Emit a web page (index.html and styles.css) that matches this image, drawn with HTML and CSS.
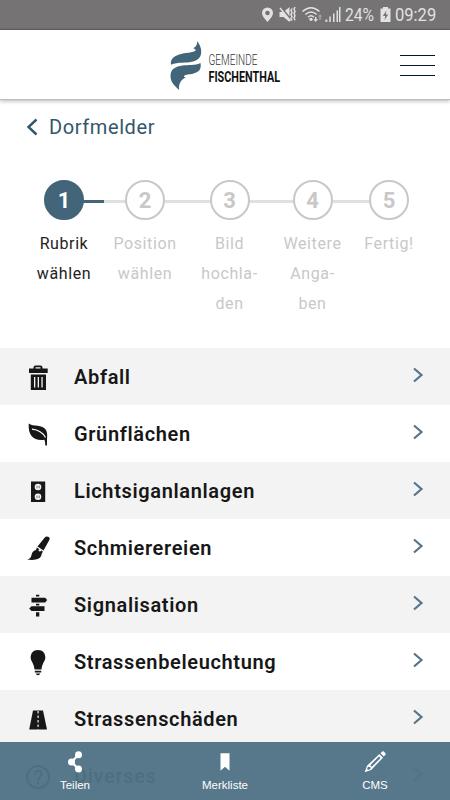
FILE: index.html
```html
<!DOCTYPE html>
<html lang="de">
<head>
<meta charset="utf-8">
<meta name="viewport" content="width=device-width, initial-scale=1">
<title>Dorfmelder</title>
<link rel="stylesheet" href="styles.css">
</head>
<body>
<div class="app">
  <div class="status">
    <svg class="status-icons" width="80" height="30" viewBox="0 0 80 30">
      <path fill-rule="evenodd" d="M7.500 7.500a5.500 5.500 0 0 0-5.500 5.500c0 3.500 5.500 9 5.500 9s5.500-5.500 5.500-9a5.500 5.500 0 0 0-5.500-5.500zm0 3.200a2.300 2.300 0 1 1 0 4.600 2.300 2.300 0 0 1 0-4.600z"/>
      <path d="M19.500 12h4l6-5v15l-6-5h-4z"/>
      <path class="cut" d="M20.500 6.500l10 12.500"/>
      <path class="line" d="M20 8l10.500 13M32 8.500l-1 2 1 2-1 2 1 2-1 2 1 2M35 7l-1 2.200 1 2.200-1 2.200 1 2.200-1 2.200 1 2.200"/>
      <path class="line" d="M42.500 11.500q8.500-7.500 17 0M45.300 14.500q5.700-5 11.400 0M48 17.200q3-3 6 0"/>
      <circle cx="51" cy="19.300" r="1.600"/>
      <path d="M55 17h1.400v2.300H58L55.700 22l-2.300-2.700H55z"/>
      <path class="dim" d="M59.300 20v-3.400h-1.500l2.200-2.300 2.200 2.300h-1.500V20z"/>
      <path d="M65.500 19.500h1.800V22h-1.800zM69.300 16.500h1.500V22h-1.500zM73 13.500h1.500V22H73zM76.500 10.500H78V22h-1.500z"/>
    </svg>
    <svg class="status-icons sig" width="5" height="30" viewBox="0 0 5 30"><path d="M0 7h1.500v15H0z"/></svg>
    <span class="status-text pct">24%</span>
    <svg class="status-icons" width="11" height="30" viewBox="0 0 11 30">
      <path fill-rule="evenodd" d="M3 7h5v1.500h2.500V22H.5V8.500H3zM6.500 10.500L2.800 16h2.500l-.8 4L8.300 14.500H5.800z"/>
    </svg>
    <span class="status-text time">09:29</span>
  </div>

  <header class="header">
    <svg class="logo" width="116" height="52" viewBox="0 0 116 52">
      <path class="mark" d="M28 1c3 4 5 8 4 13-1 4-3 6-8 7.500-6 2-15 0-22 3.300-1-6 3-9 11-11 6-1.500 11-1 14-3.500-1-1-2-1.500-2.500-2.200 3-1.800 4-4 3.500-7.100z"/>
      <path class="mark" d="M31.500 23c1 6-1 9-7 10.500-4 1.200-8 .8-9.500 2.500 0 1.500 1 1 1.500 1.700-4.500 1.800-7 6-6.500 12.300C5 45 1.500 42 1.500 36c0-7 5-9.500 12-10.500 6-.8 12 .3 18-2.500z"/>
      <text class="logo-top" x="39.500" y="25" textLength="49" lengthAdjust="spacingAndGlyphs">GEMEINDE</text>
      <text class="logo-bottom" x="39.500" y="42" textLength="71.500" lengthAdjust="spacingAndGlyphs">FISCHENTHAL</text>
    </svg>
    <div class="burger"><span></span><span></span><span></span></div>
  </header>

  <main>
    <div class="back">
      <svg width="12" height="18" viewBox="0 0 12 18"><path d="M10.500 1.500L2.500 9l8 7.500"/></svg>
      <h1>Dorfmelder</h1>
    </div>

    <ol class="steps">
      <li class="step active"><span class="num">1</span><span class="label">Rubrik<br>wählen</span></li>
      <li class="step"><span class="num">2</span><span class="label">Position<br>wählen</span></li>
      <li class="step"><span class="num">3</span><span class="label">Bild<br>hochla-<br>den</span></li>
      <li class="step"><span class="num">4</span><span class="label">Weitere<br>Anga-<br>ben</span></li>
      <li class="step"><span class="num">5</span><span class="label">Fertig!</span></li>
    </ol>

    <ul class="list">
      <li class="row">
        <svg class="icon" viewBox="0 0 28 28"><path fill-rule="evenodd" d="M5 4.500h4.500V3.500Q9.500 1.500 11.500 1.500h5q2 0 2 2v1H23.700V9H5zM11.500 4.500h5V3.300h-5zM6.800 10.500h15.200v15.500H6.800zM10 13v10.500h1.300V13zM13.700 13v10.500H15V13zM17.400 13v10.500h1.300V13z"/></svg>
        <span class="name">Abfall</span><svg class="chev" viewBox="0 0 12 18"><path d="M2 2.500l7.500 6.500L2 15.500"/></svg>
      </li>
      <li class="row">
        <svg class="icon" viewBox="0 0 28 28"><path d="M4.700 2.500C9 6 18.500 3 22 9c1.500 3 1.300 6 1 9v6.500h-1.700c0-2.500-.3-4.500-1-5.700C10 20 4 15.500 4.700 2.500z"/><path class="vein" d="M8 8.200c5 .5 10.500 3 13.500 8.300"/></svg>
        <span class="name">Grünflächen</span><svg class="chev" viewBox="0 0 12 18"><path d="M2 2.500l7.500 6.500L2 15.500"/></svg>
      </li>
      <li class="row">
        <svg class="icon" viewBox="0 0 28 28"><path d="M7 3.500h14.200v20.500H7z"/><g class="socket"><circle cx="14" cy="9" r="3.300"/><circle cx="14" cy="18.700" r="3.300"/></g><path class="slot" d="M12.500 7.800h1v2.400h-1zM14.700 7.800h1v2.400h-1zM12.500 17.500h1v2.400h-1zM14.700 17.500h1v2.400h-1z"/></svg>
        <span class="name">Lichtsiganlanlagen</span><svg class="chev" viewBox="0 0 12 18"><path d="M2 2.500l7.500 6.500L2 15.500"/></svg>
      </li>
      <li class="row">
        <svg class="icon" viewBox="0 0 28 28"><path d="M21 2.300q1-1.500 3-.5 2.500 1 1.300 3.200L19.500 15.500l-6-4zM12.800 12.500l6 4-1.300 3C17 23.500 12 26 3 24.500c3-.5 4-2 4.500-4.500.5-3 2.500-4.500 4.500-5z"/><circle class="dot" cx="15.900" cy="15.300" r="1.200"/></svg>
        <span class="name">Schmierereien</span><svg class="chev" viewBox="0 0 12 18"><path d="M2 2.500l7.500 6.500L2 15.500"/></svg>
      </li>
      <li class="row">
        <svg class="icon" viewBox="0 0 28 28"><path d="M12 2.800h3.300v1.700H12zM7.500 5.700h13.700l2 2.300-2 2.500H7.500zM12 11.700h3.300v1.800H12zM20.500 14.200H7.500l-2.300 2.400 2.300 2.500h13zM12 20.300h3.300v4.100H12z"/></svg>
        <span class="name">Signalisation</span><svg class="chev" viewBox="0 0 12 18"><path d="M2 2.500l7.500 6.500L2 15.500"/></svg>
      </li>
      <li class="row">
        <svg class="icon" viewBox="0 0 28 28"><path d="M14 1c5 0 7.300 3.500 7.300 7.500 0 4-3.300 5.500-3.800 12h-7C10 14 6.700 12.500 6.700 8.500 6.700 4.500 9 1 14 1zM10.800 21.700h6.400v1.700h-6.400zM11.800 24.600h4.400q-.4 1.600-2.200 1.600t-2.200-1.600z"/></svg>
        <span class="name">Strassenbeleuchtung</span><svg class="chev" viewBox="0 0 12 18"><path d="M2 2.500l7.500 6.500L2 15.500"/></svg>
      </li>
      <li class="row">
        <svg class="icon" viewBox="0 0 28 28"><path d="M9 4.500h10L23 23.500H5.200z"/><path class="lane" d="M14.100 5v18.500"/></svg>
        <span class="name">Strassenschäden</span><svg class="chev" viewBox="0 0 12 18"><path d="M2 2.500l7.500 6.500L2 15.500"/></svg>
      </li>
      <li class="row plain">
        <svg class="icon" viewBox="0 0 28 28"><circle class="ring" cx="14" cy="14" r="11"/><path class="ring" d="M10.500 11.500c0-5 7.500-4.500 7 0-.3 2.500-3.500 2.500-3.500 5.500M14 19v2.500"/></svg>
        <span class="name">Diverses</span><svg class="chev" viewBox="0 0 12 18"><path d="M2 2.500l7.500 6.500L2 15.500"/></svg>
      </li>
    </ul>
  </main>

  <nav class="tabs">
    <a class="tab">
      <svg width="24" height="24" viewBox="0 0 24 24"><path class="stroke" d="M15.500 4.700L8.500 12l7 7"/><circle cx="15.500" cy="4.700" r="3.500"/><circle cx="8.500" cy="12" r="3.500"/><circle cx="15.500" cy="19" r="3.500"/></svg>
      <span>Teilen</span>
    </a>
    <a class="tab">
      <svg width="24" height="24" viewBox="0 0 24 24"><path d="M7.500 3.300h9v17.500L12 16.800l-4.500 4z"/></svg>
      <span>Merkliste</span>
    </a>
    <a class="tab">
      <svg width="24" height="24" viewBox="0 0 24 24"><path fill-rule="evenodd" d="M1.700 22.300l2.300-6.500L16.300 4l3.700 3.700L8.200 20zM5 16.800l-.9 2.300.9.900 2.300-.9.300-1.900zM7.300 15.200l1.500 1.500L17.600 8 16 6.400z"/><path d="M17.500 3.200l1.700-1.600q.8-.8 1.600 0l1.600 1.600q.8.800 0 1.600L20.800 6.500z"/></svg>
      <span>CMS</span>
    </a>
  </nav>
</div>
</body>
</html>
```
FILE: styles.css
```css
* { box-sizing: border-box; }
body { margin: 0; background: #fff; font-family: Roboto, "Liberation Sans", sans-serif; }
ul, ol { list-style: none; margin: 0; padding: 0; }
.app { position: relative; width: 450px; height: 800px; overflow: hidden; }

.status { display: flex; align-items: center; height: 30px; padding-left: 260px; background: #757374; border-bottom: 1px solid #666263; color: #e2e2e2; }
.status-icons { flex: none; fill: #e2e2e2; }
.status-icons .line { fill: none; stroke: #e2e2e2; stroke-width: 1.500; }
.status-icons .cut { fill: none; stroke: #757374; stroke-width: 2; }
.status-icons .dim { fill: #aaa; }
.sig { margin-right: 1px; margin-left: -1px; }
.status-text { flex: none; font-size: 18px; line-height: 30px; white-space: nowrap; transform-origin: left center; }
.pct { width: 35px; transform: scaleX(.87); }
.time { width: 44px; margin-left: 4px; transform: scaleX(.92); }

.header { position: relative; display: flex; justify-content: space-between; height: 70px; padding: 10px 15px 0 169px; background: #fff; border-bottom: 1px solid #bdbdbd; box-shadow: 0 1px 4px rgba(0, 0, 0, .3); }
.mark { fill: #426579; }
.logo { overflow: visible; }
.logo text { font-family: Roboto, sans-serif; }
.logo-top { font-size: 15.500px; font-weight: 300; fill: #333; }
.logo-bottom { font-size: 15px; font-weight: 700; fill: #111; }
.burger { display: flex; flex-direction: column; gap: 9px; width: 35px; padding-top: 15px; }
.burger span { height: 1px; background: #04152c; }

.back { display: flex; align-items: center; gap: 11px; height: 54px; padding-left: 26px; color: #34566a; }
.back svg { fill: none; stroke: currentColor; stroke-width: 2.400; }
.back h1 { margin: 0; font-size: 20px; font-weight: 400; letter-spacing: .6px; }

.steps { display: grid; grid-template-columns: 80px 82px 87px 79px 74px; height: 194px; padding: 26px 24px 0; }
.step { position: relative; display: flex; flex-direction: column; align-items: center; color: #c8c8c8; }
.step::before { content: ""; position: absolute; top: 20px; left: 0; right: 0; height: 3px; background: #e0e0e0; }
.step:first-child::before { left: 50%; background: #426579; }
.step:last-child::before { right: 50%; }
.num { position: relative; display: flex; align-items: center; justify-content: center; width: 40px; height: 40px; border: 2.500px solid #c8c8c8; border-radius: 50%; background: #fff; font-size: 22px; font-weight: 700; }
.active .num { border-color: #426579; background: #426579; color: #fff; }
.label { margin-top: 9px; font-size: 16px; line-height: 30px; letter-spacing: .6px; text-align: center; white-space: nowrap; }
.active .label { color: #222; }

.row { display: flex; align-items: center; height: 57px; padding: 0 26px 0 24px; color: #171717; background: #fff; }
.row:nth-child(odd) { background: #f3f3f3; }
.icon { width: 28px; height: 28px; margin-top: 3px; fill: currentColor; }
.name { flex: 1; margin-left: 22px; font-size: 20px; font-weight: 600; letter-spacing: .64px; }
.chev { width: 12px; height: 18px; margin-bottom: 3px; fill: none; stroke: #55758a; stroke-width: 2.200; }
.vein { fill: none; stroke: #fff; stroke-width: 1.200; }
.socket, .dot { fill: #f3f3f3; }
.slot { fill: #777; }
.lane { fill: none; stroke: #ddd; stroke-width: 1.300; stroke-dasharray: 2.500 2; }
.ring { fill: none; stroke: currentColor; stroke-width: 2; }

.tabs { position: absolute; left: 0; right: 0; bottom: 0; display: grid; grid-template-columns: repeat(3, 1fr); height: 58px; background: rgba(80, 115, 133, .96); }
.tab { display: flex; flex-direction: column; align-items: center; padding-top: 8px; color: #fff; font: 11.500px/16px "Liberation Sans", sans-serif; }
.tab svg { fill: #fff; margin-bottom: 3px; }
.tab .stroke { fill: none; stroke: #fff; stroke-width: 2.200; }
```
